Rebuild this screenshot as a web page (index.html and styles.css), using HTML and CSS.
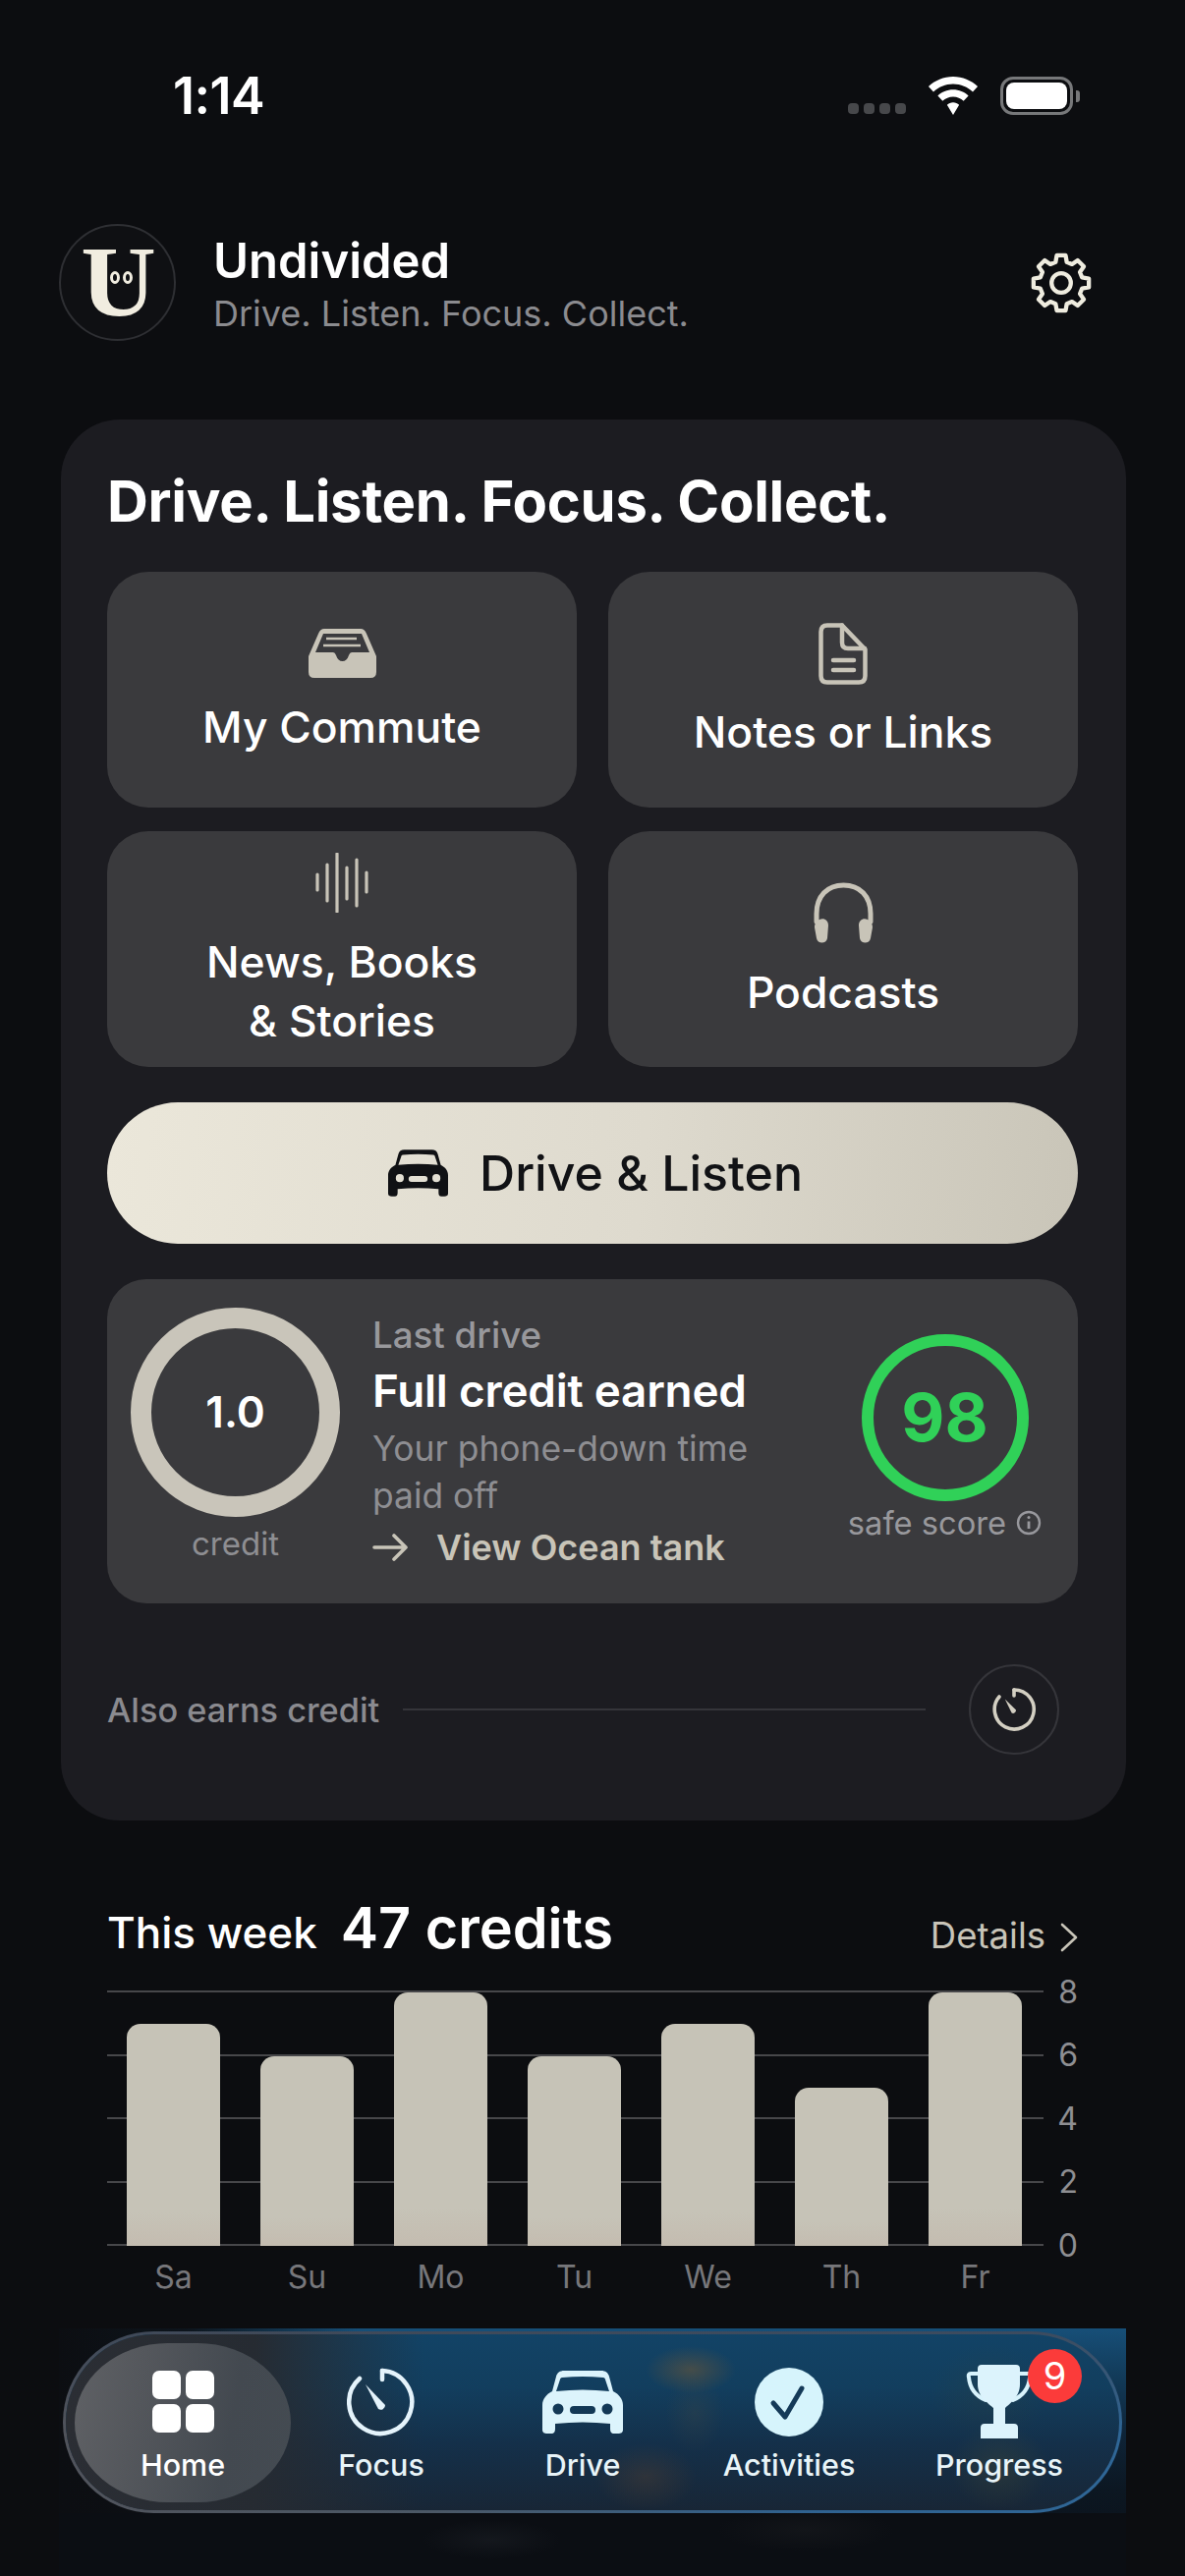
FILE: index.html
```html
<!DOCTYPE html>
<html lang="en">
<head>
<meta charset="utf-8">
<title>Undivided</title>
<link rel="stylesheet" href="styles.css">
</head>
<body>
<div class="screen">
  <div class="status">
    <span class="time">1:14</span>
    <div class="status-right">
      <div class="dots"><i></i><i></i><i></i><i></i></div>
      <svg class="wifi" viewBox="0 0 50 38"><path fill="#fff" d="M25 0C15.500 0 7 3.800 .6 9.700L5.500 15C10.500 10.300 17.400 7.300 25 7.300S39.500 10.300 44.500 15L49.400 9.700C43 3.800 34.500 0 25 0ZM25 13C19 13 13.800 15.300 9.800 19L14.600 24.200C17.300 21.600 21 20 25 20S32.700 21.600 35.400 24.200L40.200 19C36.200 15.300 31 13 25 13ZM25 25.500C22.600 25.500 20.600 26.400 19 28L25 38L31 28C29.400 26.400 27.400 25.500 25 25.500Z"/></svg>
      <div class="battery"><div class="battery-fill"></div></div>
    </div>
  </div>

  <header class="app-head">
    <div class="logo"><span class="logo-u">U</span><i class="eye eye-l"></i><i class="eye eye-r"></i></div>
    <div class="brand">
      <div class="brand-name">Undivided</div>
      <div class="brand-sub">Drive. Listen. Focus. Collect.</div>
    </div>
    <svg class="gear" viewBox="-32 -32 64 64" fill="none" stroke="#efecdf" stroke-width="4.300" stroke-linejoin="round"><path d="M-5.690-21.250L-4.460-28.150H4.460L5.690-21.250L11-19.050L16.750-23.060L23.060-16.750L19.050-11L21.250-5.690L28.150-4.460V4.460L21.250 5.690L19.050 11L23.060 16.750L16.750 23.060L11 19.050L5.690 21.250L4.460 28.150H-4.460L-5.690 21.250L-11 19.050L-16.750 23.060L-23.060 16.750L-19.050 11L-21.250 5.690L-28.150 4.460V-4.460L-21.250-5.690L-19.050-11L-23.060-16.750L-16.750-23.060L-11-19.050Z"/><circle r="9.800"/></svg>
  </header>

  <section class="card">
    <h1 class="card-title">Drive. Listen. Focus. Collect.</h1>
    <div class="tiles">
      <div class="tile">
        <svg class="ico-inbox" viewBox="0 0 69 50"><path fill-rule="evenodd" fill="#c8c4b8" d="M16 0H53Q57 0 59 5L69 28V44Q69 50 63 50H6Q0 50 0 44V28L10 5Q12 0 16 0ZM15 5L7 24H25Q27 24 28 27Q30 33 34.500 33Q39 33 41 27Q42 24 44 24H62L54 5Z"/><path stroke="#c8c4b8" stroke-width="2.500" d="M18 10H49M15 17H53"/></svg>
        <div class="tile-label">My Commute</div>
      </div>
      <div class="tile">
        <svg class="ico-doc" viewBox="0 0 50 63" fill="none" stroke="#c8c4b8" stroke-width="4.500" stroke-linejoin="round" stroke-linecap="round"><path d="M9 2.500H24L47.500 27V54Q47.500 60.500 41 60.500H9Q2.500 60.500 2.500 54V9Q2.500 2.500 9 2.500Z"/><path d="M24 2.500V20Q24 26 30 26H47"/><path d="M15 38H36M15 48H36"/></svg>
        <div class="tile-label tile-label-low">Notes or Links</div>
      </div>
      <div class="tile">
        <svg class="ico-wave" viewBox="0 0 54 61" stroke="#c8c4b8" stroke-width="3.200" stroke-linecap="round"><path d="M2 22V38M12 12V49M22 1V60M32 15V47M42 7V54M52 20V40"/></svg>
        <div class="tile-label">News, Books<br>&amp; Stories</div>
      </div>
      <div class="tile">
        <svg class="ico-phones" viewBox="0 0 61 62"><path fill="none" stroke="#c8c4b8" stroke-width="5" stroke-linecap="round" d="M3 40V32C3 14 14 3 30.500 3S58 14 58 32V40"/><path fill="#c8c4b8" d="M6 38C10 36 15 38 15 44L14 57C13 63 4 63 3 57L1 46C1 42 3 39 6 38ZM55 38C51 36 46 38 46 44L47 57C48 63 57 63 58 57L60 46C60 42 58 39 55 38Z"/></svg>
        <div class="tile-label">Podcasts</div>
      </div>
    </div>

    <div class="cta">
      <svg class="ico-cta" viewBox="0 0 82 64"><path fill="#101114" fill-rule="evenodd" d="M22 0H60C64 0 67 2 68 6L72 21C78 24 82 29 82 35V60C82 63 80 64 77 64H73C70 64 69 62 69 59V54Q41 51 13 54V59C13 62 12 64 9 64H5C2 64 0 63 0 60V35C0 29 4 24 10 21L14 6C15 2 18 0 22 0ZM20 7C19 7 18 8 18 9L14 21Q41 18 68 21L64 9C64 8 63 7 62 7Q41 5 20 7ZM10.500 39A5.500 5.500 0 1 0 21.500 39A5.500 5.500 0 1 0 10.500 39ZM60.500 39A5.500 5.500 0 1 0 71.500 39A5.500 5.500 0 1 0 60.500 39ZM32 36A4 4 0 0 0 32 44H50A4 4 0 0 0 50 36Z"/></svg>
      <span>Drive &amp; Listen</span>
    </div>

    <div class="drive">
      <div class="credit-col">
        <div class="credit-ring"><span>1.0</span></div>
        <div class="credit-label">credit</div>
      </div>
      <div class="drive-info">
        <div class="drive-kicker">Last drive</div>
        <div class="drive-head">Full credit earned</div>
        <div class="drive-desc">Your phone-down time<br>paid off</div>
        <div class="drive-link">
          <svg class="ico-arrow" viewBox="0 0 36 28" fill="none" stroke="#c8c4b8" stroke-width="3.600" stroke-linecap="round" stroke-linejoin="round"><path d="M2 14H34M22 2L34 14L22 26"/></svg>
          <span>View Ocean tank</span>
        </div>
      </div>
      <div class="safe-col">
        <div class="safe-ring"><span>98</span></div>
        <div class="safe-label">safe score
          <svg class="ico-info" viewBox="0 0 26 26" fill="none" stroke="#98989d" stroke-width="2.400"><circle cx="13" cy="13" r="11"/><path d="M13 11.500V19" stroke-width="2.800"/><circle cx="13" cy="7.500" r="1.500" fill="#98989d" stroke="none"/></svg>
        </div>
      </div>
    </div>

    <div class="also">
      <span class="also-text">Also earns credit</span>
      <div class="also-line"></div>
      <div class="also-btn">
        <svg viewBox="0 0 48 48" fill="none" stroke="#d3cfc2" stroke-width="3.600" stroke-linecap="round"><path d="M24 4A20 20 0 1 1 9 11"/><path d="M24 4V10"/><path fill="#d3cfc2" stroke="none" d="M14.800 13.500L26 24.500A3 3 0 0 1 21.600 27.500Z"/></svg>
      </div>
    </div>
  </section>

  <section class="week">
    <div class="week-head">
      <span class="week-label">This week</span>
      <span class="week-total">47 credits</span>
      <span class="week-details">Details
        <svg class="ico-chev" viewBox="0 0 18 30" fill="none" stroke="#c8c4b8" stroke-width="2.600" stroke-linecap="round" stroke-linejoin="round"><path d="M2 2L16 15L2 28"/></svg>
      </span>
    </div>
    <div class="chart">
      <div class="rules">
        <div class="rule"><i></i><span>8</span></div>
        <div class="rule"><i></i><span>6</span></div>
        <div class="rule"><i></i><span>4</span></div>
        <div class="rule"><i></i><span>2</span></div>
        <div class="rule"><i></i><span>0</span></div>
      </div>
      <div class="bars">
        <div class="bar" style="height:226px"></div>
        <div class="bar" style="height:193px"></div>
        <div class="bar" style="height:258px"></div>
        <div class="bar" style="height:193px"></div>
        <div class="bar" style="height:226px"></div>
        <div class="bar" style="height:161px"></div>
        <div class="bar" style="height:258px"></div>
      </div>
    </div>
    <div class="days"><span>Sa</span><span>Su</span><span>Mo</span><span>Tu</span><span>We</span><span>Th</span><span>Fr</span></div>
  </section>

  <div class="nav-backdrop"></div>
  <nav class="nav">
    <div class="nav-item nav-home">
      <div class="grid-ico"><i></i><i></i><i></i><i></i></div>
      <span>Home</span>
    </div>
    <div class="nav-item nav-focus">
      <svg class="nav-ico" width="70" height="70" viewBox="0 0 70 70" fill="none" stroke="#e4f3fb" stroke-width="4.500" stroke-linecap="round"><path d="M36 3A32 32 0 1 1 13 11"/><path d="M36 3V12"/><path fill="#e4f3fb" stroke="none" d="M19 17L39 38A4.500 4.500 0 0 1 32 42Z"/></svg>
      <span>Focus</span>
    </div>
    <div class="nav-item nav-drive">
      <svg class="nav-ico" width="82" height="64" viewBox="0 0 82 64"><path fill="#dcf4fc" fill-rule="evenodd" d="M22 0H60C64 0 67 2 68 6L72 21C78 24 82 29 82 35V60C82 63 80 64 77 64H73C70 64 69 62 69 59V54Q41 51 13 54V59C13 62 12 64 9 64H5C2 64 0 63 0 60V35C0 29 4 24 10 21L14 6C15 2 18 0 22 0ZM20 7C19 7 18 8 18 9L14 21Q41 18 68 21L64 9C64 8 63 7 62 7Q41 5 20 7ZM10.500 39A5.500 5.500 0 1 0 21.500 39A5.500 5.500 0 1 0 10.500 39ZM60.500 39A5.500 5.500 0 1 0 71.500 39A5.500 5.500 0 1 0 60.500 39ZM32 36A4 4 0 0 0 32 44H50A4 4 0 0 0 50 36Z"/></svg>
      <span>Drive</span>
    </div>
    <div class="nav-item nav-act">
      <svg class="nav-ico" width="70" height="70" viewBox="0 0 70 70"><circle cx="35" cy="35" r="35" fill="#d6f4fc"/><path fill="none" stroke="#153a58" stroke-width="5" stroke-linecap="round" stroke-linejoin="round" d="M19 36L31 50L48 21"/></svg>
      <span>Activities</span>
    </div>
    <div class="nav-item nav-prog">
      <svg class="nav-ico" width="74" height="76" viewBox="0 0 74 76"><path fill="none" stroke="#d8f3fc" stroke-width="4" stroke-linecap="round" d="M15 9H8Q5 9 6 13C7 24 14 32 23 36M58 9H66Q69 9 68 13C67 24 60 32 51 36"/><path fill="#dcf3fc" d="M19 0H54Q58 0 58 4V20C58 33 47 40 43 44V60H52Q56 60 56 64V75H18V64Q18 60 22 60H31V44C27 40 15 33 15 20V4Q15 0 19 0Z"/></svg>
      <span>Progress</span>
      <b class="badge">9</b>
    </div>
  </nav>
</div>
</body>
</html>
```

FILE: styles.css
```css
* { box-sizing: border-box; }
html, body { margin: 0; padding: 0; }
body {
  width: 1206px;
  height: 2622px;
  background: #0c0d10;
  font-family: Inter, "Liberation Sans", sans-serif;
  color: #fff;
  overflow: hidden;
}
.screen { position: relative; width: 1206px; height: 2622px; overflow: hidden; }

/* status bar */
.status {
  height: 228px;
  padding: 0 114px 0 176px;
  display: flex;
  justify-content: space-between;
  align-items: flex-start;
}
.time {
  margin-top: 69px;
  font-size: 52px;
  line-height: 58px;
  font-weight: 600;
  letter-spacing: -0.500px;
}
.status-right { display: flex; align-items: flex-start; margin-top: 78px; }
.dots { display: flex; gap: 5px; margin-top: 27px; margin-right: 21px; }
.dots i { width: 11px; height: 11px; border-radius: 4px; background: #47484b; }
.wifi { width: 54px; height: 39px; margin-right: 21px; }
.battery {
  width: 74px;
  height: 39px;
  border: 3px solid #77787a;
  border-radius: 13px;
  padding: 3px;
  position: relative;
}
.battery::after {
  content: "";
  position: absolute;
  right: -10px;
  top: 11px;
  width: 4px;
  height: 12px;
  border-radius: 0 3px 3px 0;
  background: #77787a;
}
.battery-fill { width: 100%; height: 100%; background: #fff; border-radius: 8px; }

/* header */
.app-head {
  height: 199px;
  padding: 0 94px 0 60px;
  display: flex;
  align-items: flex-start;
  position: relative;
}
.logo {
  position: relative;
  width: 119px;
  height: 119px;
  border-radius: 50%;
  border: 2.500px solid #2e2f33;
  background: #0f1013;
  flex: none;
  text-align: center;
}
.logo-u {
  display: block;
  font-family: "Liberation Serif", serif;
  font-weight: 700;
  font-size: 102px;
  line-height: 114px;
  color: #f1ede0;
  transform: scaleX(1.04) translateX(1px);
}
.eye {
  position: absolute;
  top: 46px;
  width: 10px;
  height: 13px;
  border-radius: 50%;
  border: 3px solid #f1ede0;
  background: #0f1013;
}
.eye-l { left: 50px; }
.eye-r { left: 63px; }
.brand { margin-left: 38px; flex: 1; }
.brand-name { font-size: 49px; line-height: 58px; font-weight: 600; margin-top: 9px; }
.brand-sub { font-size: 36px; line-height: 44px; color: #8b8b8f; margin-top: 2px; }
.gear { width: 64px; height: 64px; flex: none; margin-top: 28px; }

/* card */
.card {
  margin-left: 62px;
  width: 1084px;
  height: 1426px;
  background: #1c1c21;
  border-radius: 60px;
  padding: 40px 49px 0 47px;
}
.card-title {
  margin: 0 0 29px;
  font-size: 58px;
  line-height: 86px;
  font-weight: 700;
  letter-spacing: -0.300px;
}
.tiles {
  display: grid;
  grid-template-columns: 478px 478px;
  grid-auto-rows: 240px;
  column-gap: 32px;
  row-gap: 24px;
}
.tile {
  background: #3a3a3d;
  border-radius: 42px;
  padding-top: 5px;
  display: flex;
  flex-direction: column;
  align-items: center;
  justify-content: center;
}
.tile-label { font-size: 44.400px; line-height: 60px; font-weight: 500; text-align: center; margin-top: 20px; }
.tile-label-low { margin-top: 18px; }
.ico-inbox { width: 69px; height: 50px; }
.ico-doc { width: 50px; height: 63px; }
.ico-wave { width: 54px; height: 61px; }
.ico-phones { width: 61px; height: 62px; }

.cta {
  margin-top: 36px;
  height: 144px;
  border-radius: 72px;
  background: linear-gradient(95deg, #ebe7da 0%, #dedace 55%, #c9c5b8 100%);
  display: flex;
  align-items: center;
  justify-content: center;
  gap: 32px;
  padding-left: 6px;
  color: #111215;
  font-size: 50px;
  font-weight: 500;
}
.ico-cta { width: 61px; height: 50px; }

.drive {
  margin-top: 36px;
  height: 330px;
  background: #3a3a3d;
  border-radius: 40px;
  display: flex;
  align-items: flex-start;
  padding: 29px 0 0 24px;
}
.credit-col { width: 213px; flex: none; text-align: center; }
.credit-ring {
  width: 213px;
  height: 213px;
  border-radius: 50%;
  border: 21px solid #c9c5ba;
  display: flex;
  align-items: center;
  justify-content: center;
}
.credit-ring span { font-size: 44px; font-weight: 600; margin-top: -1px; }
.credit-label { font-size: 33px; line-height: 40px; color: #8e8e92; margin-top: 7px; }
.drive-info { margin-left: 33px; width: 484px; flex: none; margin-top: 6px; }
.drive-kicker { font-size: 36.700px; line-height: 44px; font-weight: 500; color: #98989c; }
.drive-head { font-size: 45.800px; line-height: 54px; font-weight: 600; margin-top: 8px; letter-spacing: -0.200px; }
.drive-desc { font-size: 35.400px; line-height: 48px; color: #8e8e92; margin-top: 8px; }
.drive-link { display: flex; align-items: center; gap: 29px; margin-top: 4px; line-height: 48px; font-size: 36px; font-weight: 600; color: #c8c4b8; }
.ico-arrow { width: 36px; height: 28px; flex: none; }
.safe-col { width: 197px; flex: none; margin-top: 27px; display: flex; flex-direction: column; align-items: center; }
.safe-ring {
  width: 170px;
  height: 170px;
  border-radius: 50%;
  border: 12px solid #30d158;
  display: flex;
  align-items: center;
  justify-content: center;
}
.safe-ring span { font-size: 68px; font-weight: 700; color: #30d158; margin-top: -2px; }
.safe-label { display: flex; align-items: center; gap: 10px; font-size: 32.700px; line-height: 40px; color: #98989c; margin-top: 2px; white-space: nowrap; }
.ico-info { width: 26px; height: 26px; }

.also { display: flex; align-items: center; margin-top: 62px; }
.also-text { font-size: 34.300px; font-weight: 500; color: #8a8a8f; white-space: nowrap; width: 301px; flex: none; }
.also-line { width: 532px; height: 2.500px; background: #35353a; flex: none; }
.also-btn {
  width: 92px;
  height: 92px;
  margin-left: 44px;
  border-radius: 50%;
  border: 2.500px solid #35353a;
  display: flex;
  align-items: center;
  justify-content: center;
  flex: none;
}
.also-btn svg { width: 48px; height: 48px; }

/* week */
.week { margin-left: 109px; width: 988px; }
.week-head { display: flex; align-items: baseline; margin-top: 76px; height: 97px; line-height: 66px; }
.week-label { font-size: 44px; font-weight: 500; }
.week-total { font-size: 57.500px; font-weight: 600; margin-left: 24px; flex: 1; }
.week-details { font-size: 36.500px; color: #c8c4b8; display: inline-flex; align-items: center; gap: 15px; }
.ico-chev { width: 18px; height: 30px; margin-top: 4px; }
.chart { position: relative; height: 260px; width: 988px; }
.rules { display: flex; flex-direction: column; justify-content: space-between; height: 260px; }
.rule { display: flex; align-items: center; height: 2px; }
.rule i { display: block; width: 953px; height: 2px; background: #47474a; }
.rule span { font-size: 32px; color: #8e8e92; width: 35px; text-align: right; flex: none; }
.bars {
  position: absolute;
  left: 20px;
  top: 2px;
  height: 258px;
  display: flex;
  align-items: flex-end;
  gap: 41px;
}
.bar {
  width: 95px;
  border-radius: 14px 14px 0 0;
  background: linear-gradient(180deg, #c6c3b7 0%, #c6c3b7 85%, #c4bcb0 100%);
}
.days { display: flex; gap: 41px; margin: 12px 0 0 20px; }
.days span { width: 95px; text-align: center; font-size: 32px; line-height: 40px; color: #77777b; }

/* bottom nav */
.nav-backdrop {
  position: absolute;
  left: 60px;
  top: 2370px;
  width: 1086px;
  height: 252px;
  background:
    radial-gradient(70px 20px at 440px 215px, rgba(60,66,74,.18), transparent),
    radial-gradient(90px 22px at 760px 205px, rgba(60,60,60,.15), transparent),
    linear-gradient(180deg, rgba(11,14,19,0) 0 188px, #0b0e13 188px),
    linear-gradient(90deg, #0c0e12 0%, rgba(12,14,18,.9) 12%, rgba(12,14,18,0) 28%),
    linear-gradient(180deg, #174f78 0%, #123a58 20%, #0e2438 42%, #0c1722 65%, #0b0f16 100%);
}
.nav {
  position: absolute;
  left: 64px;
  top: 2373px;
  width: 1078px;
  height: 185px;
  border-radius: 93px;
  border: 3px solid transparent;
  background:
    radial-gradient(46px 24px at 636px 36px, rgba(120,90,50,.5), transparent) padding-box,
    radial-gradient(30px 40px at 640px 80px, rgba(90,80,60,.2), transparent) padding-box,
    radial-gradient(52px 34px at 590px 145px, rgba(120,75,40,.25), transparent) padding-box,
    radial-gradient(50px 44px at 950px 135px, rgba(110,100,40,.2), transparent) padding-box,
    radial-gradient(60px 50px at 940px 60px, rgba(60,70,50,.2), transparent) padding-box,
    linear-gradient(90deg, #2b2e34 0%, #262b32 18%, rgba(38,43,50,0) 34%) padding-box,
    linear-gradient(180deg, #124366 0%, #123e5e 30%, #14304a 62%, #182636 100%) padding-box,
    linear-gradient(180deg, rgba(62,72,88,.9) 0%, rgba(62,72,88,0) 55%) border-box,
    linear-gradient(90deg, #50535b 0%, #4b5866 35%, #2f6290 70%, #2f6696 100%) border-box;
  display: flex;
  padding: 9px 8px 8px 9px;
}
.nav-item {
  position: relative;
  height: 162px;
  display: flex;
  flex-direction: column;
  align-items: center;
  font-size: 30.500px;
  font-weight: 500;
  color: #e8f4f8;
  flex: none;
  padding-top: 25px;
}
.nav-item span { position: absolute; top: 106px; left: 0; right: 0; text-align: center; line-height: 36px; }
.nav-home {
  width: 220px;
  padding-top: 28px;
  border-radius: 96px / 82px;
  background: linear-gradient(100deg, #5f6165 0%, #54575c 30%, #434950 70%, #444b52 100%);
  color: #fff;
}
.nav-focus { width: 184px; }
.nav-drive { width: 226px; padding-top: 28px; }
.nav-act { width: 194px; }
.nav-prog { width: 234px; padding-top: 22px; }
.nav-ico { flex: none; }
.grid-ico { display: grid; grid-template-columns: 29px 29px; grid-auto-rows: 29px; gap: 5px; }
.grid-ico i { background: #fff; border-radius: 7px; }
.badge {
  position: absolute;
  left: 146px;
  top: 6px;
  width: 55px;
  height: 55px;
  border-radius: 50%;
  background: #fb3b3a;
  color: #fff;
  font-size: 38px;
  font-weight: 400;
  line-height: 55px;
  text-align: center;
}
```
